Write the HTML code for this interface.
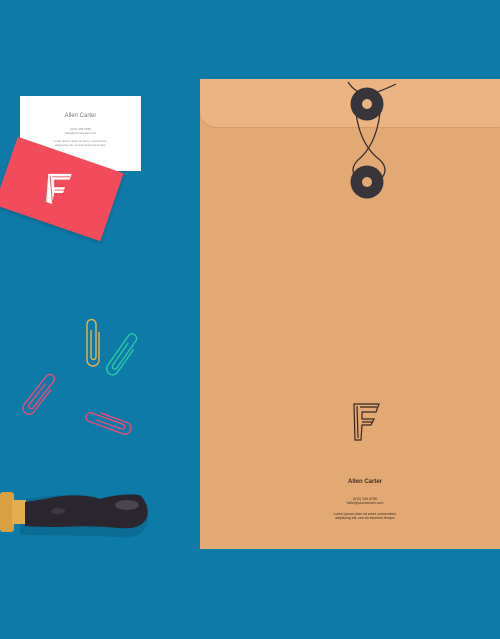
<!DOCTYPE html>
<html><head><style>
body{margin:0;width:500px;height:639px;background:#0d7aa7;overflow:hidden;position:relative;font-family:"Liberation Sans",sans-serif}
.a{position:absolute}
.t{font-size:3px;color:#888;text-align:center;line-height:4px}
</style></head><body>
<div class="a" style="left:20px;top:96px;width:121px;height:75px;background:#fff">
<div style="text-align:center;font-size:6px;color:#777;margin-top:17px">Allen Carter</div>
<div class="t" style="margin-top:8px">(012) 345 6789<br>hello@yourdomain.com</div>
<div class="t" style="margin-top:4px">Lorem ipsum dolor sit amet, consectetur,<br>adipiscing elit, sed do eiusmod tempor</div>
</div>
<div class="a" style="left:3px;top:153px;width:112px;height:72px;background:#f24b5b;transform:rotate(19deg);transform-origin:center;box-shadow:1px 2px 3px rgba(0,0,0,.15)">
<svg class="a" style="left:38px;top:16px;transform:rotate(-19deg)" width="36" height="40" viewBox="0 0 32 36"><path d="M6 4 L28 4 L26 10 L12 10 L12 16 L22 16 L20 22 L12 22 L10 32 L4 30 Z" fill="#fff" stroke="#f24b5b" stroke-width=".8"/><path d="M8 6 L10 30 M10 7 L26 7 M12 19 L21 19" stroke="#f24b5b" stroke-width=".8"/></svg>
</div>
<div class="a" style="left:200px;top:79px;width:300px;height:470px;background:#e2a974"></div>
<div class="a" style="left:200px;top:79px;width:300px;height:48px;background:#ebb482;border-bottom-left-radius:16px;box-shadow:0 1px 1px rgba(150,90,40,.2)"></div>
<svg class="a" style="left:330px;top:75px" width="80" height="130" viewBox="0 0 80 130">
<path d="M18 7 Q25 18 38 20 Q52 16 66 9" fill="none" stroke="#2e2b2f" stroke-width="1.2"/>
<path d="M26 38 Q30 70 50 85 Q60 95 50 105 M50 38 Q46 70 28 85 Q18 95 28 105" fill="none" stroke="#2e2b2f" stroke-width="1.2"/>
<circle cx="37" cy="29" r="16.5" fill="#38353a"/><circle cx="37" cy="29" r="5" fill="#ebb482"/>
<circle cx="37" cy="107" r="16.5" fill="#38353a"/><circle cx="37" cy="107" r="5" fill="#e2a974"/>
</svg>
<svg class="a" style="left:352px;top:402px" width="30" height="40" viewBox="0 0 30 40"><path d="M2 2 H27 L24 10 H10 V17 H22 L19 23 H10 L9 38 H3 Z M5 4 L6 36 M8 5 H25 M10 20 H20" fill="none" stroke="#3a2820" stroke-width="1.2"/></svg>
<div class="a" style="left:300px;top:479px;width:130px;text-align:center;font-size:6px;font-weight:bold;color:#3d2e25">Allen Carter</div>
<div class="a" style="left:300px;top:497px;width:130px;text-align:center;font-size:3.5px;line-height:4px;color:#3d2e25">(012) 345 6789<br>hello@yourdomain.com</div>
<div class="a" style="left:300px;top:512px;width:130px;text-align:center;font-size:3.5px;line-height:4px;color:#3d2e25">Lorem ipsum dolor sit amet, consectetur,<br>adipiscing elit, sed do eiusmod tempor</div>
<svg class="a" style="left:0;top:0" width="200" height="639">
<defs><path id="c" d="M-2 -12 V15 A2.5 2.5 0 0 0 3 15 V-18 A4.5 4.5 0 0 0 -6 -18 V18 A6 6 0 0 0 6 18 V-10"/></defs>
<g fill="none" stroke-width="1.4">
<use href="#c" transform="translate(93,342)" stroke="#e8b44c"/>
<use href="#c" transform="translate(123,354) rotate(35)" stroke="#29c9a9"/>
<use href="#c" transform="translate(40,394) rotate(38)" stroke="#e54e78"/>
<use href="#c" transform="translate(108,422) rotate(-70)" stroke="#e54e78"/>
</g>
<path d="M20 500 Q80 490 100 498 Q130 493 148 512 Q150 540 120 537 Q70 535 20 535 Z" fill="#0b6d94"/>
<rect x="0" y="492" width="14" height="40" rx="3" fill="#d9a042"/>
<rect x="12" y="500" width="14" height="24" fill="#e3ae4e"/>
<path d="M25 502 Q40 500 55 497 Q80 493 100 499 Q120 493 140 495 Q150 505 147 517 Q142 530 120 528 Q90 525 60 527 Q40 527 25 526 Z" fill="#2b2530"/>
<ellipse cx="127" cy="505" rx="12" ry="5" fill="#4a4550"/>
<ellipse cx="58" cy="511" rx="7" ry="3" fill="#3d3842"/>
</svg>
</body></html>
